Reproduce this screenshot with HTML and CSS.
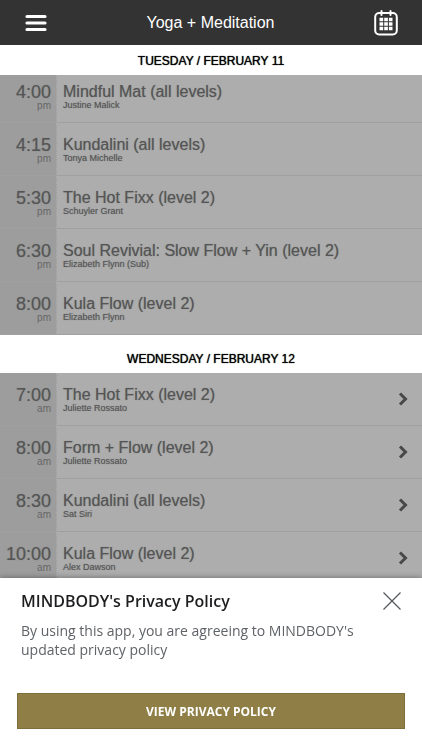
FILE: index.html
```html
<!DOCTYPE html>
<html lang="en">
<head>
  <meta charset="UTF-8">
  <meta name="viewport" content="width=device-width, initial-scale=1">
  <title>Yoga + Meditation</title>
  <link rel="stylesheet" href="styles.css">
</head>
<body>

  <!-- Top bar -->
  <header class="topbar">
    <button class="icon-btn" type="button" aria-label="Menu">
      <svg width="22" height="18" viewBox="0 0 22 18" stroke="#fff" stroke-width="3.2" stroke-linecap="round">
        <path d="M2 2.5H20M2 9H20M2 15.5H20"/>
      </svg>
    </button>
    <h1>Yoga + Meditation</h1>
    <button class="icon-btn" type="button" aria-label="Calendar">
      <svg width="24" height="26" viewBox="0 0 24 26" fill="none" stroke="#fff" stroke-width="2">
        <rect x="1.2" y="3" width="21.6" height="21.5" rx="4"/>
        <path d="M7.5 1V5M16.5 1V5" stroke-linecap="round"/>
        <path d="M5.5 9.5H18.5M5.5 14H18.5M5.5 18.5H18.5" stroke-width="3.5" stroke-dasharray="3.7 1"/>
      </svg>
    </button>
  </header>

  <main class="schedule">
    <!-- Tuesday -->
    <section>
      <h2 class="day">TUESDAY / FEBRUARY 11</h2>
      <ul class="classes classes-scrolled">
        <li class="class">
          <div class="time">4:00<span>pm</span></div>
          <div class="info"><h3>Mindful Mat (all levels)</h3><p>Justine Malick</p></div>
        </li>
        <li class="class">
          <div class="time">4:15<span>pm</span></div>
          <div class="info"><h3>Kundalini (all levels)</h3><p>Tonya Michelle</p></div>
        </li>
        <li class="class">
          <div class="time">5:30<span>pm</span></div>
          <div class="info"><h3>The Hot Fixx (level 2)</h3><p>Schuyler Grant</p></div>
        </li>
        <li class="class">
          <div class="time">6:30<span>pm</span></div>
          <div class="info"><h3>Soul Revivial: Slow Flow + Yin (level 2)</h3><p>Elizabeth Flynn (Sub)</p></div>
        </li>
        <li class="class">
          <div class="time">8:00<span>pm</span></div>
          <div class="info"><h3>Kula Flow (level 2)</h3><p>Elizabeth Flynn</p></div>
        </li>
      </ul>
    </section>

    <!-- Wednesday -->
    <section>
      <h2 class="day">WEDNESDAY / FEBRUARY 12</h2>
      <ul class="classes">
        <li class="class">
          <div class="time">7:00<span>am</span></div>
          <div class="info"><h3>The Hot Fixx (level 2)</h3><p>Juliette Rossato</p></div>
          <svg class="arrow" width="10" height="14" viewBox="0 0 10 14"><path d="M2 1.5L7.5 7L2 12.5"/></svg>
        </li>
        <li class="class">
          <div class="time">8:00<span>am</span></div>
          <div class="info"><h3>Form + Flow (level 2)</h3><p>Juliette Rossato</p></div>
          <svg class="arrow" width="10" height="14" viewBox="0 0 10 14"><path d="M2 1.5L7.5 7L2 12.5"/></svg>
        </li>
        <li class="class">
          <div class="time">8:30<span>am</span></div>
          <div class="info"><h3>Kundalini (all levels)</h3><p>Sat Siri</p></div>
          <svg class="arrow" width="10" height="14" viewBox="0 0 10 14"><path d="M2 1.5L7.5 7L2 12.5"/></svg>
        </li>
        <li class="class">
          <div class="time">10:00<span>am</span></div>
          <div class="info"><h3>Kula Flow (level 2)</h3><p>Alex Dawson</p></div>
          <svg class="arrow" width="10" height="14" viewBox="0 0 10 14"><path d="M2 1.5L7.5 7L2 12.5"/></svg>
        </li>
      </ul>
    </section>
  </main>

  <!-- Privacy notice -->
  <div class="privacy" role="dialog" aria-labelledby="privacy-title">
    <div class="privacy-head">
      <h2 id="privacy-title">MINDBODY's Privacy Policy</h2>
      <button class="icon-btn" type="button" aria-label="Close">
        <svg width="18" height="18" viewBox="0 0 18 18" stroke="#54575b" stroke-width="1.2">
          <path d="M0.5 0.5L17.5 17.5M17.5 0.5L0.5 17.5"/>
        </svg>
      </button>
    </div>
    <p>By using this app, you are agreeing to MINDBODY's updated privacy policy</p>
    <button class="view-btn" type="button">VIEW PRIVACY POLICY</button>
  </div>

</body>
</html>
```
FILE: styles.css
```css
* {
  box-sizing: border-box;
  margin: 0;
  padding: 0;
}

body {
  display: flex;
  flex-direction: column;
  height: 100vh;
  overflow: hidden;
  background-color: #fff;
  font-family: "Liberation Sans", Arial, sans-serif;
}

svg {
  display: block;
}

.icon-btn {
  background: none;
  border: none;
  cursor: pointer;
}

/* Top bar */
.topbar {
  display: flex;
  align-items: center;
  justify-content: space-between;
  flex: none;
  height: 45px;
  padding: 0 24px 0 25px;
  background-color: #333;
  color: #fff;
}

.topbar h1 {
  font-size: 16px;
  font-weight: normal;
}

/* Schedule */
.schedule {
  flex: 1;
  min-height: 0;
  overflow: hidden;
}

.day {
  position: relative;
  z-index: 1;
  height: 30px;
  background-color: #fff;
  color: #000;
  font-size: 12px;
  font-weight: normal;
  line-height: 32px;
  text-align: center;
  text-shadow: 0 0 1px #000;
}

section + section {
  padding-top: 8px;
}

.classes {
  list-style: none;
}

/* first row sits partly under the day header */
.classes-scrolled {
  margin-top: -5px;
}

.class {
  display: flex;
  height: 53px;
  background-color: #adadad;
  border-bottom: 1px solid #a0a0a0;
  color: #555;
}

.time {
  flex: none;
  width: 57px;
  padding: 14px 5px 0 0;
  background-color: #9d9d9d;
  border-right: 1px dotted #adadad;
  font-size: 18px;
  line-height: 17px;
  text-align: right;
  text-shadow: 0 0 1px #777;
}

.time span {
  display: block;
  color: #666;
  font-size: 10px;
  line-height: 9px;
  text-shadow: none;
}

.info {
  flex: 1;
  padding: 13px 0 0 6px;
}

.info h3 {
  font-size: 16px;
  font-weight: normal;
  line-height: 18px;
  text-shadow: 0 0 1px #777;
}

.info p {
  font-size: 9px;
  line-height: 9px;
  text-shadow: 0 0 1px #777;
}

.arrow {
  align-self: center;
  margin-right: 14px;
  fill: none;
  stroke: #484848;
  stroke-width: 3;
}

/* Privacy notice */
.privacy {
  position: fixed;
  left: 0;
  right: 0;
  bottom: 0;
  z-index: 2;
  padding: 12px 17px 21px;
  background-color: #fff;
  box-shadow: 0 0 6px rgba(0, 0, 0, 0.4);
  color: #5f6266;
  font-family: "Open Sans", sans-serif;
}

.privacy-head {
  display: flex;
  align-items: center;
  justify-content: space-between;
  height: 22px;
  padding: 0 4px;
}

.privacy-head h2 {
  color: #1d1e20;
  font-size: 16px;
  font-weight: 600;
}

.privacy p {
  margin: 9px 4px 34px;
  font-size: 14px;
  line-height: 19px;
}

.view-btn {
  display: block;
  width: 100%;
  height: 36px;
  background-color: #8f7f46;
  border: 1px solid #7d6f3a;
  color: #fff;
  font-family: inherit;
  font-size: 12px;
  font-weight: bold;
  cursor: pointer;
}
```
